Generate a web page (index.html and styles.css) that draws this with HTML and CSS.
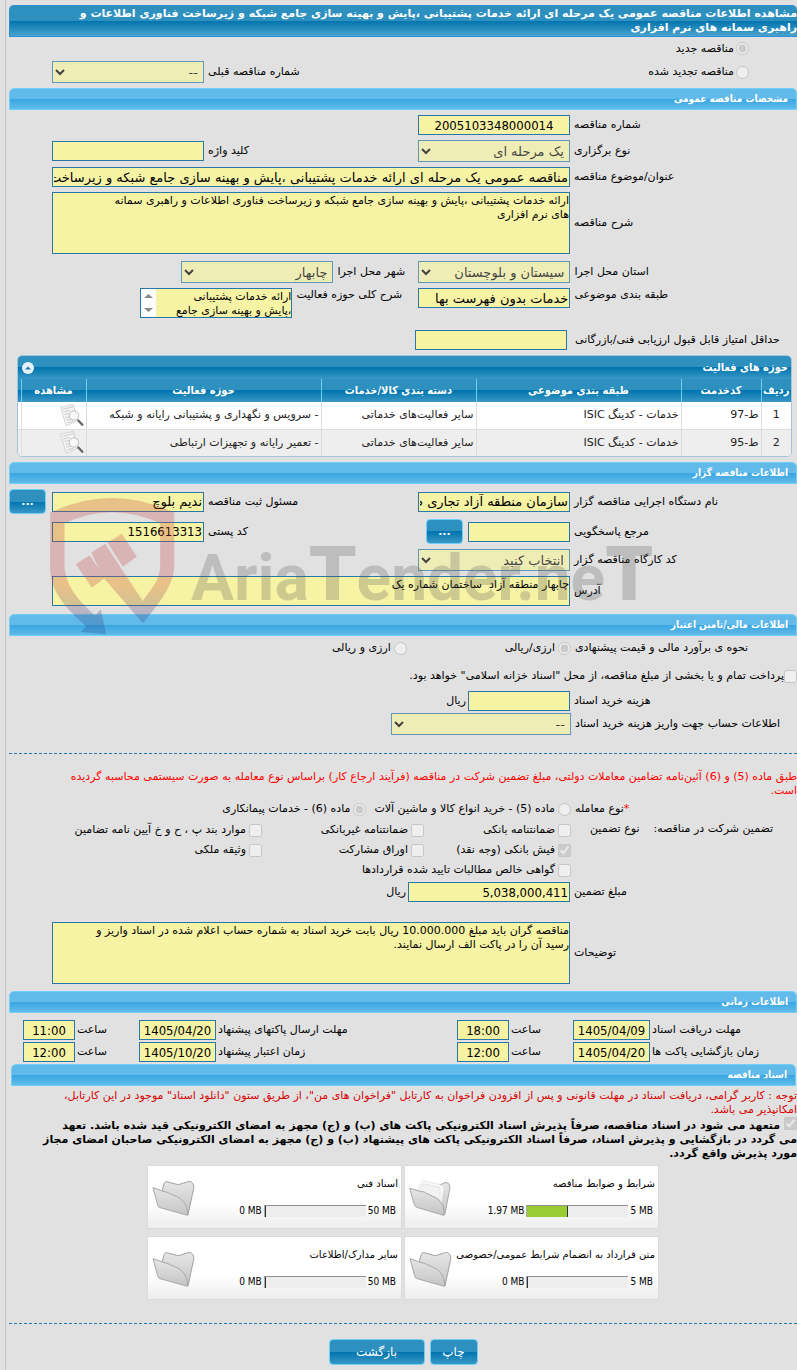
FILE: index.html
```html
<!DOCTYPE html>
<html lang="fa" dir="rtl">
<head>
<meta charset="utf-8">
<title>مشاهده اطلاعات مناقصه عمومی</title>
<link rel="stylesheet" href="styles.css">
</head>
<body>
<svg class="defs" aria-hidden="true">
  <defs>
    <linearGradient id="paper" x1="0" y1="0" x2="0" y2="1"><stop offset="0" stop-color="#e6e6e6"/><stop offset="1" stop-color="#c4c4c4"/></linearGradient>
    <symbol id="view" viewBox="0 0 72 68">
      <path d="M2 9 L40 1 L54 50 L18 65 Z" fill="#f4f4f4" stroke="#c4c4c4" stroke-width="2"/>
      <path d="M9 15 L40 8 M11 23 L30 19 M14 31 L28 28 M16 40 L30 37 M19 48 L34 44 M22 56 L40 51" stroke="#b5b5b5" stroke-width="2" fill="none"/>
      <circle cx="42" cy="34" r="14" fill="#fafafa" fill-opacity=".8" stroke="#bdbdbd" stroke-width="3"/>
      <path d="M55 49 L67 62" stroke="#666" stroke-width="7" stroke-linecap="round"/>
    </symbol>
    <symbol id="folder" viewBox="0 0 130 110">
      <path d="M32 26 L38 7 Q40 4 45 4 L70 11 Q78 14 84 12 L110 4 Q118 1 122 8 Q128 14 126 24 L109 104 L40 80 Z" fill="url(#paper)" stroke="#9f9f9f" stroke-width="3" stroke-linejoin="round"/>
      <path d="M3 22 L36 34 Q46 35 54 40 L74 49 Q86 53 95 65 Q107 78 108 106 L22 82 Q17 78 16 70 Z" fill="url(#paper)" stroke="#a6a6a6" stroke-width="3" stroke-linejoin="round"/>
    </symbol>
    <symbol id="folder-full" viewBox="0 0 130 110">
      <path d="M30 28 L38 10 L84 18 L112 6 Q124 8 124 22 L108 104 L40 80 Z" fill="url(#paper)" stroke="#a6a6a6" stroke-width="3" stroke-linejoin="round"/>
      <path d="M24 32 L40 1 L90 12 Q102 14 106 24 L98 70 Z" fill="#fafafa" stroke="#dadada" stroke-width="2"/>
      <path d="M30 34 L42 10 L94 22 L94 70" fill="#f2f2f2" stroke="#dcdcdc" stroke-width="2"/>
      <path d="M2 24 L36 34 Q46 33 54 40 L76 50 Q88 54 97 67 Q108 82 106 106 L24 82 Q17 79 15 70 Z" fill="url(#paper)" stroke="#a6a6a6" stroke-width="3" stroke-linejoin="round"/>
    </symbol>
  </defs>
</svg>

<main class="page">
  <h1 class="title">مشاهده اطلاعات مناقصه عمومی یک مرحله ای ارائه خدمات پشتیبانی ،پایش و بهینه سازی جامع شبکه و زیرساخت فناوری اطلاعات و<br>راهبری سمانه های نرم افزاری</h1>

  <section class="kind">
    <div class="kind-option"><input type="radio" id="kind-new" name="kind" checked disabled><label for="kind-new">مناقصه جدید</label></div>
    <div class="kind-row">
      <div class="kind-option"><input type="radio" id="kind-renew" name="kind" disabled><label for="kind-renew">مناقصه تجدید شده</label></div>
      <label class="label" for="previous">شماره مناقصه قبلی</label>
      <select id="previous" class="control" disabled><option>--</option></select>
    </div>
  </section>

  <h2 class="bar">مشخصات مناقصه عمومی</h2>
  <section class="stack">
    <div class="row"><label class="label" for="number">شماره مناقصه</label><input id="number" class="control num center" type="text" value="2005103348000014" readonly></div>
    <div class="row">
      <label class="label" for="method">نوع برگزاری</label><select id="method" class="control" disabled><option>یک مرحله ای</option></select>
      <label class="label" for="keyword">کلید واژه</label><input id="keyword" class="control" type="text" readonly>
    </div>
    <div class="row"><label class="label" for="subject">عنوان/موضوع مناقصه</label><input id="subject" class="control wide" type="text" value="مناقصه عمومی یک مرحله ای ارائه خدمات پشتیبانی ،پایش و بهینه سازی جامع شبکه و زیرساخت فناوری اطلاعات و راهبری سمانه های نرم افزاری" readonly></div>
    <div class="row"><label class="label" for="details">شرح مناقصه</label><textarea id="details" class="control wide tall" readonly>ارائه خدمات پشتیبانی ،پایش و بهینه سازی جامع شبکه و زیرساخت فناوری اطلاعات و راهبری سمانه
های نرم افزاری</textarea></div>
    <div class="row near spaced">
      <label class="label" for="province">استان محل اجرا</label><select id="province" class="control" disabled><option>سیستان و بلوچستان</option></select>
      <label class="label" for="city">شهر محل اجرا</label><select id="city" class="control" disabled><option>چابهار</option></select>
    </div>
    <div class="row scope">
      <label class="label" for="category">طبقه بندی موضوعی</label><input id="category" class="control" type="text" value="خدمات بدون فهرست بها" readonly>
      <label class="label" for="scope">شرح کلی حوزه فعالیت</label>
      <div class="scroller">
        <textarea id="scope" class="control short" readonly>ارائه خدمات پشتیبانی
،پایش و بهینه سازی جامع
شبکه و زیرساخت</textarea>
        <svg class="arrows" viewBox="0 0 15 28" aria-hidden="true"><path d="M3 9 L7.500 5 L12 9 Z M3 19 L7.500 23 L12 19 Z" fill="#8a8a8a"/></svg>
      </div>
    </div>
    <div class="row minimum"><label class="label" for="minimum">حداقل امتیاز قابل قبول ارزیابی فنی/بازرگانی</label><input id="minimum" class="control" type="text" readonly></div>
  </section>

  <section class="panel">
    <div class="panel-head">
      <h3 class="panel-title">حوزه های فعالیت</h3>
      <button class="collapse" type="button" aria-label="بستن"><svg viewBox="0 0 12 12"><circle cx="6" cy="6" r="6" fill="#e4f1f9"/><path d="M3 7.500 L6 4.500 L9 7.500 Z" fill="#1f77aa"/></svg></button>
    </div>
    <table class="grid">
      <colgroup><col class="c-row"><col class="c-code"><col class="c-subject"><col class="c-group"><col><col class="c-view"><col class="c-edge"></colgroup>
      <thead><tr><th>ردیف</th><th>کدخدمت</th><th>طبقه بندی موضوعی</th><th>دسته بندی کالا/خدمات</th><th>حوزه فعالیت</th><th>مشاهده</th><td></td></tr></thead>
      <tbody>
        <tr><td class="center">1</td><td>ط-97</td><td>خدمات - کدینگ ISIC</td><td>سایر فعالیت‌های خدماتی</td><td>- سرویس و نگهداری و پشتیبانی رایانه و شبکه</td><td><button class="view" type="button" aria-label="مشاهده"><svg><use href="#view"/></svg></button></td><td></td></tr>
        <tr><td class="center">2</td><td>ط-95</td><td>خدمات - کدینگ ISIC</td><td>سایر فعالیت‌های خدماتی</td><td>- تعمیر رایانه و تجهیزات ارتباطی</td><td><button class="view" type="button" aria-label="مشاهده"><svg><use href="#view"/></svg></button></td><td></td></tr>
      </tbody>
    </table>
  </section>

  <h2 class="bar">اطلاعات مناقصه گزار</h2>
  <section class="stack owner">
    <div class="row">
      <label class="label" for="agency">نام دستگاه اجرایی مناقصه گزار</label><input id="agency" class="control" type="text" value="سازمان منطقه آزاد تجاری صنعتی" readonly>
      <label class="label" for="officer">مسئول ثبت مناقصه</label><input id="officer" class="control" type="text" value="ندیم بلوچ" readonly>
      <button class="button more" type="button">...</button>
    </div>
    <div class="row">
      <label class="label" for="contact">مرجع پاسخگویی</label>
      <div class="pair"><input id="contact" class="control" type="text" readonly><button class="button more" type="button">...</button></div>
      <label class="label" for="postal">کد پستی</label><input id="postal" class="control num" type="text" value="1516613313" readonly>
    </div>
    <div class="row"><label class="label" for="workshop">کد کارگاه مناقصه گزار</label><select id="workshop" class="control" disabled><option>انتخاب کنید</option></select></div>
    <div class="row"><label class="label" for="address">آدرس</label><textarea id="address" class="control wide short" readonly>چابهار منطقه آزاد  ساختمان شماره یک</textarea></div>
    <div class="watermark" aria-hidden="true">
      <svg class="shield" viewBox="150 130 380 420">
        <defs><linearGradient id="mark" gradientUnits="userSpaceOnUse" x1="0" y1="400" x2="0" y2="520"><stop offset="0" stop-color="#c54242"/><stop offset="1" stop-color="#1d4a90"/></linearGradient></defs>
        <path fill="url(#mark)" d="M150 180 Q335 92 522 180 V345 C520 400 470 460 428 512 L310 375 L273 300 L315 273 L362 345 L428 445 C455 405 480 385 480 335 V212 Q335 145 193 212 V340 C195 400 240 450 285 488 L302 470 L318 545 L242 538 L258 520 C195 465 150 415 150 345 Z M227 335 L268 308 L315 375 L275 405 Z M322 270 L365 243 L410 312 L368 342 Z"/>
      </svg>
      <span class="brand" dir="ltr">Aria<b>T</b>ender.ne<b>T</b></span>
    </div>
  </section>

  <h2 class="bar">اطلاعات مالی/تامین اعتبار</h2>
  <section class="finance">
    <div class="row choices">
      <span class="label">نحوه ی برآورد مالی و قیمت پیشنهادی</span>
      <div class="options currency">
        <span class="option"><input type="radio" id="rial" name="currency" checked disabled><label for="rial">ارزی/ریالی</label></span>
        <span class="option"><input type="radio" id="both" name="currency" disabled><label for="both">ارزی و ریالی</label></span>
      </div>
    </div>
    <div class="option treasury"><input type="checkbox" id="treasury" disabled><label for="treasury">پرداخت تمام و یا بخشی از مبلغ مناقصه، از محل "اسناد خزانه اسلامی" خواهد بود.</label></div>
    <div class="row"><label class="label" for="fee">هزینه خرید اسناد</label><div class="amount"><input id="fee" class="control" type="text" readonly>ریال</div></div>
    <div class="row account"><label class="label" for="account">اطلاعات حساب جهت واریز هزینه خرید اسناد</label><select id="account" class="control" disabled><option>--</option></select></div>
  </section>

  <hr class="dash">

  <section class="guarantee">
    <p class="rule">طبق ماده (5) و (6) آئین‌نامه تضامین معاملات دولتی، مبلغ تضمین شرکت در مناقصه (فرآیند ارجاع کار) براساس نوع معامله به صورت سیستمی محاسبه گردیده<br>است.</p>
    <div class="row choices">
      <span class="label deal"><i class="star">*</i>نوع معامله</span>
      <div class="options">
        <span class="option"><input type="radio" id="article5" name="deal" disabled><label for="article5">ماده (5) - خرید انواع کالا و ماشین آلات</label></span>
        <span class="option"><input type="radio" id="article6" name="deal" checked disabled><label for="article6">ماده (6) - خدمات پیمانکاری</label></span>
      </div>
    </div>
    <div class="row choices">
      <div class="label double"><span>تضمین شرکت در مناقصه:</span><span>نوع تضمین</span></div>
      <div class="checks">
        <span class="option"><input type="checkbox" id="g1" disabled><label for="g1">ضمانتنامه بانکی</label></span>
        <span class="option"><input type="checkbox" id="g2" disabled><label for="g2">ضمانتنامه غیربانکی</label></span>
        <span class="option"><input type="checkbox" id="g3" disabled><label for="g3">موارد بند پ ، ح و خ آیین نامه تضامین</label></span>
        <span class="option"><input type="checkbox" id="g4" checked disabled><label for="g4">فیش بانکی (وجه نقد)</label></span>
        <span class="option"><input type="checkbox" id="g5" disabled><label for="g5">اوراق مشارکت</label></span>
        <span class="option"><input type="checkbox" id="g6" disabled><label for="g6">وثیقه ملکی</label></span>
        <span class="option full"><input type="checkbox" id="g7" disabled><label for="g7">گواهی خالص مطالبات تایید شده قراردادها</label></span>
      </div>
    </div>
    <div class="row total"><label class="label" for="total">مبلغ تضمین</label><div class="amount"><input id="total" class="control num" type="text" value="5,038,000,411" readonly>ریال</div></div>
    <div class="row"><label class="label" for="notes">توضیحات</label><textarea id="notes" class="control wide tall" readonly>مناقصه گران باید مبلغ 10.000.000 ریال بابت خرید اسناد به شماره حساب اعلام شده در اسناد واریز و
رسید آن را در پاکت الف ارسال نمایند.</textarea></div>
  </section>

  <h2 class="bar">اطلاعات زمانی</h2>
  <section class="times">
    <label class="label" for="d1">مهلت دریافت اسناد</label><input id="d1" class="control num center" type="text" value="1405/04/09" dir="ltr" readonly>
    <label class="label" for="t1">ساعت</label><input id="t1" class="control num center" type="text" value="18:00" readonly>
    <label class="label" for="d2">مهلت ارسال پاکتهای پیشنهاد</label><input id="d2" class="control num center" type="text" value="1405/04/20" dir="ltr" readonly>
    <label class="label" for="t2">ساعت</label><input id="t2" class="control num center" type="text" value="11:00" readonly>
    <label class="label" for="d3">زمان بازگشایی پاکت ها</label><input id="d3" class="control num center" type="text" value="1405/04/20" dir="ltr" readonly>
    <label class="label" for="t3">ساعت</label><input id="t3" class="control num center" type="text" value="12:00" readonly>
    <label class="label" for="d4">زمان اعتبار پیشنهاد</label><input id="d4" class="control num center" type="text" value="1405/10/20" dir="ltr" readonly>
    <label class="label" for="t4">ساعت</label><input id="t4" class="control num center" type="text" value="12:00" readonly>
  </section>

  <h2 class="bar inset">اسناد مناقصه</h2>
  <p class="notice">توجه : کاربر گرامی، دریافت اسناد در مهلت قانونی و پس از افزودن فراخوان به کارتابل "فراخوان های من"، از طریق ستون "دانلود اسناد" موجود در این کارتابل،<br>امکانپذیر می باشد.</p>
  <p class="pledge"><input type="checkbox" id="pledge" checked disabled> <label for="pledge">متعهد می شود در اسناد مناقصه، صرفاً پذیرش اسناد الکترونیکی پاکت های (ب) و (ج) مجهز به امضای الکترونیکی قید شده باشد. تعهد<br>می گردد در بازگشایی و پذیرش اسناد، صرفاً اسناد الکترونیکی پاکت های پیشنهاد (ب) و (ج) مجهز به امضای الکترونیکی صاحبان امضای مجاز<br>مورد پذیرش واقع گردد.</label></p>

  <section class="files">
    <article class="file"><div class="file-info"><h3 class="file-name">شرایط و ضوابط مناقصه</h3><div class="usage"><span dir="ltr">5 MB</span><div class="meter"><div class="fill" style="width:40%"></div></div><span dir="ltr">1.97 MB</span></div></div><svg class="folder"><use href="#folder-full"/></svg></article>
    <article class="file"><div class="file-info"><h3 class="file-name">اسناد فنی</h3><div class="usage"><span dir="ltr">50 MB</span><div class="meter"><div class="fill" style="width:0%"></div></div><span dir="ltr">0 MB</span></div></div><svg class="folder"><use href="#folder"/></svg></article>
    <article class="file"><div class="file-info"><h3 class="file-name">متن قرارداد به انضمام شرایط عمومی/خصوصی</h3><div class="usage"><span dir="ltr">5 MB</span><div class="meter"><div class="fill" style="width:0%"></div></div><span dir="ltr">0 MB</span></div></div><svg class="folder"><use href="#folder"/></svg></article>
    <article class="file"><div class="file-info"><h3 class="file-name">سایر مدارک/اطلاعات</h3><div class="usage"><span dir="ltr">50 MB</span><div class="meter"><div class="fill" style="width:0%"></div></div><span dir="ltr">0 MB</span></div></div><svg class="folder"><use href="#folder"/></svg></article>
  </section>

  <hr class="dash">
  <footer class="actions"><button class="button print" type="button">چاپ</button><button class="button back" type="button">بازگشت</button></footer>
</main>
</body>
</html>
```
FILE: styles.css
```css
* { box-sizing: border-box; }
body {
  margin: 0;
  background: #e1e1e1;
  color: #000;
  font: 11px/14px "DejaVu Sans", sans-serif;
}
h1, h2, h3, p { margin: 0; }
.defs { position: absolute; width: 0; height: 0; }
.page {
  min-height: 100vh;
  margin-left: 5px;
  padding: 5px 0 4px 3px;
  border-left: 1px solid #c6c6c6;
}

.title {
  min-height: 32px;
  padding: 1px 0;
  border: 1px solid #2a8fd8;
  border-right: 0;
  border-radius: 5px 5px 0 0;
  background: linear-gradient(#2d90bf 50%, #0074ae 50%, #4aa3cc);
  color: #fff;
  font-size: 11px;
  line-height: 14px;
}
.bar {
  height: 22px;
  padding: 0 8px;
  border: 1px solid #6fd0f7;
  border-radius: 5px 5px 0 0;
  background: linear-gradient(#62baea 50%, #38a6e2 50%, #62baea);
  color: #fff;
  font-family: "DejaVu Sans Condensed", "DejaVu Sans", sans-serif;
  font-size: 10px;
  line-height: 20px;
}
.inset { margin: 0 1px 0 2px; }

.control {
  width: 100%;
  min-width: 0;
  height: 20px;
  margin: 0;
  padding: 0 1px;
  border: 1px solid #2a77a8;
  border-radius: 0;
  background-color: #f6f3a5;
  color: #000;
  font: 13px/16px "DejaVu Sans", sans-serif;
}
.num { font-family: "DejaVu Sans Condensed", "DejaVu Sans", sans-serif; }
select.control { height: 22px; opacity: .7; color: #000; }
textarea.control { display: block; resize: none; padding: 1px 0; font-size: 11px; line-height: 14px; }
.center { text-align: center; }
textarea.tall { height: 62px; }
textarea.short { height: 30px; }
.scroller { position: relative; }
.arrows { position: absolute; left: 1px; top: 1px; width: 15px; height: 28px; background: #fcfcfc; }
.label { text-align: end; white-space: nowrap; }
input[type="radio"], input[type="checkbox"] { width: 13px; height: 13px; margin: 0; flex: none; }

.kind { display: grid; gap: 5px; padding: 4px 0 5px; }
.kind-option { display: flex; align-items: center; gap: 2px; height: 15px; padding-right: 48px; }
.kind-row { display: grid; grid-template-columns: 379fr 206fr 152px 39px; align-items: center; column-gap: 4px; }

.stack { display: grid; gap: 5px; padding: 5px 0; position: relative; }
.row {
  display: grid;
  grid-template-columns: 222fr 152px 205fr 152px 39px;
  column-gap: 4px;
  align-items: center;
}
.wide { grid-column: 2 / 5; }
.near { grid-template-columns: 222fr 152px 77px 152px 168fr; }
.spaced { margin-top: 2px; }
.scope { grid-template-columns: 222fr 152px 118px 152px 127fr; align-items: start; }
.minimum { grid-template-columns: 222fr 152px 398fr; column-gap: 8px; margin-top: 7px; }

.panel {
  margin: 0 5px 5px 8px;
  overflow: hidden;
  border: 1px solid #a3c5dc;
  border-radius: 5px;
  background: #fff;
}
.panel-head {
  display: flex;
  align-items: center;
  justify-content: space-between;
  height: 23px;
  padding: 0 3px 0 4px;
  background: linear-gradient(#2d90bf 50%, #0074ae 50%, #3a98c5);
  color: #fff;
  font-family: "DejaVu Sans Condensed", "DejaVu Sans", sans-serif;
}
.panel-title { font-size: 11px; line-height: 14px; }
.collapse, .view { padding: 0; border: 0; background: none; }
.collapse { width: 12px; height: 12px; }
.collapse svg { display: block; width: 12px; height: 12px; }
.grid { width: 100%; table-layout: fixed; border-collapse: collapse; color: #222; }
.grid th, .grid thead td { height: 23px; padding: 0; border-left: 1px solid #6fd0f7; color: #fff; font-family: "DejaVu Sans Condensed", "DejaVu Sans", sans-serif; }
.grid thead tr { background: linear-gradient(#2d90bf 50%, #0074ae 50%, #3a98c5); }
.grid tbody td { height: 27px; padding: 0 2px; border-left: 1px solid #ddd; border-bottom: 1px solid #ddd; white-space: nowrap; }
.grid tbody tr:nth-child(2) { background: #eee; }
.grid tbody tr:last-child td { border-bottom: 0; }
.grid td:last-child { padding: 0; border-left: 0; }
.c-row { width: 30px; }
.c-code { width: 80px; }
.c-subject { width: 205px; }
.c-group { width: 155px; }
.c-view { width: 65px; }
.c-edge { width: 3px; }
.view, .view svg { display: block; width: 24px; height: 23px; }

.button {
  height: 26px;
  padding: 0;
  border: 1px solid #6fd0f7;
  border-radius: 4px;
  background: linear-gradient(#2d90bf 50%, #0074ae 50%, #3a98c5);
  color: #fff;
  font: 12px/14px "DejaVu Sans", sans-serif;
}
.more { width: 37px; height: 25px; font-size: 11px; font-weight: bold; justify-self: end; }
.pair { display: flex; gap: 5px; margin-left: -40px; }
.pair .control { width: 102px; align-self: center; }
.owner { padding-bottom: 8px; }

.watermark {
  position: absolute;
  left: 41px;
  top: 12px;
  display: flex;
  direction: ltr;
  align-items: flex-start;
  pointer-events: none;
}
.shield { width: 127px; height: 140px; opacity: .28; }
.brand {
  margin: 36px 0 0 14px;
  color: #555;
  font: bold 64px/84px Roboto, "Liberation Sans", sans-serif;
  opacity: .25;
}
.brand b { font-size: 76px; line-height: 84px; }

.finance { padding-top: 4px; }
.choices { grid-template-columns: 222fr 562fr; min-height: 16px; }
.options { display: flex; gap: 8px; }
.currency { gap: 98px; }
.option { display: flex; align-items: center; gap: 3px; white-space: nowrap; }
.treasury { margin: 13px 0 8px; gap: 0; }
.amount { display: flex; align-items: center; gap: 2px; white-space: nowrap; }
.amount .control { width: 102px; flex: none; }
.account { grid-template-columns: 222fr 180px 378fr; margin-top: 2px; }

.dash { margin: 18px 0 16px; border: 0; border-top: 1px dashed #2a77a8; }
.rule { color: #f00; padding-bottom: 4px; }
.star { color: #f00; font-style: normal; }
.double { display: flex; justify-content: flex-end; gap: 14px; padding-left: 15px; }
.guarantee .choices { align-items: start; margin-bottom: 4px; }
.checks { display: grid; grid-template-columns: 147px 162px 1fr; row-gap: 4px; }
.checks .option { height: 16px; }
.full { grid-column: 1 / -1; }
.total .amount .control { width: 162px; }
.total { margin-bottom: 20px; }
.guarantee { padding-bottom: 7px; }

.times {
  display: grid;
  grid-template-columns: 145fr 77px 60px 52px 237fr 77px 60px 52px;
  gap: 2px;
  align-items: center;
  padding: 7px 0 2px 14px;
}
.notice { margin-top: 3px; color: #d80000; }
.pledge { font-size: 11px; font-weight: bold; line-height: 14px; }
.pledge input { vertical-align: -1px; }

.files { display: grid; grid-template-columns: 255px 255px; justify-content: center; gap: 7px 2px; padding: 4px 0; }
.file {
  display: flex;
  justify-content: space-between;
  height: 64px;
  padding: 10px 3px 10px 4px;
  border: 1px solid #dadada;
  background: linear-gradient(#fff 60%, #ededed);
}
.file-name { font-size: 10px; font-weight: normal; line-height: 16px; white-space: nowrap; }
.file-info { display: grid; align-content: space-between; min-width: 0; }
.usage { display: flex; align-items: center; gap: 2px; padding-right: 2px; font-family: "DejaVu Sans Condensed", "DejaVu Sans", sans-serif; font-size: 10px; line-height: 14px; }
.meter { width: 102px; height: 12px; direction: ltr; border-top: 1px solid #8f8f8f; border-left: 1px solid #aaa; background: #ededed; }
.fill { height: 100%; border-right: 1px solid #333; background: #9c3; }
.folder { flex: none; width: 43px; height: 37px; margin-top: 4px; }
.files + .dash { margin: 19px 0 15px; }
.actions { display: flex; justify-content: center; gap: 5px; }
.print { width: 48px; }
.back { width: 96px; }
```
